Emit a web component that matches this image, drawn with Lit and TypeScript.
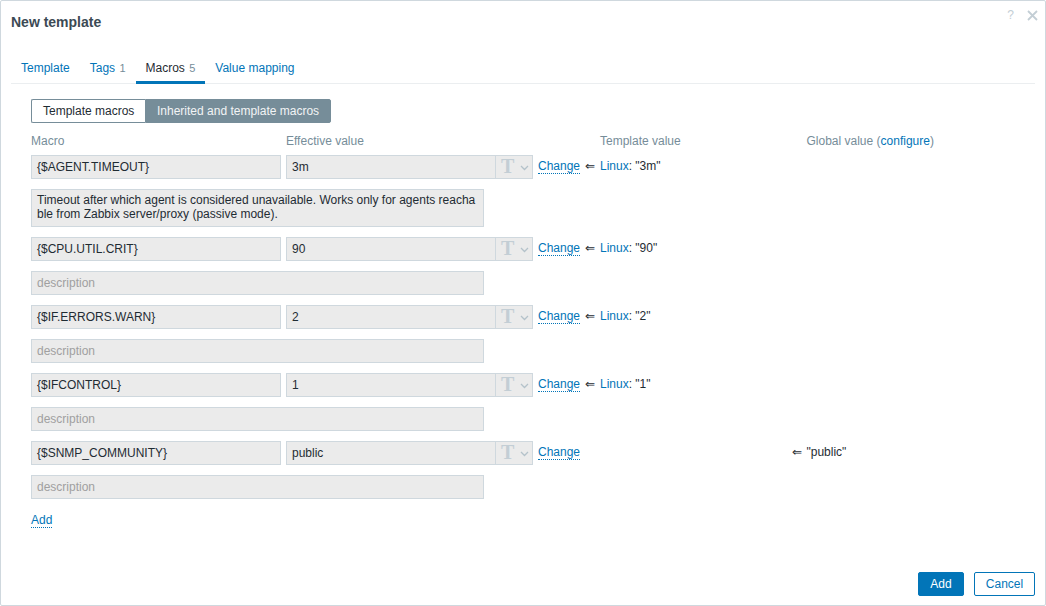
import { LitElement, html, css } from "lit";
import { customElement } from "lit/decorators.js";

interface Row { macro: string; value: string; tpl?: string; global?: string; desc?: string; }

const ROWS: Row[] = [
  { macro: "{$AGENT.TIMEOUT}", value: "3m", tpl: '"3m"', desc: "Timeout after which agent is considered unavailable. Works only for agents reachable from Zabbix server/proxy (passive mode)." },
  { macro: "{$CPU.UTIL.CRIT}", value: "90", tpl: '"90"' },
  { macro: "{$IF.ERRORS.WARN}", value: "2", tpl: '"2"' },
  { macro: "{$IFCONTROL}", value: "1", tpl: '"1"' },
  { macro: "{$SNMP_COMMUNITY}", value: "public", global: '"public"' },
];

@customElement("app-root")
export class AppRoot extends LitElement {
  static styles = css`
    :host { display: block; width: 1046px; height: 606px; font-family: "Liberation Sans", Arial, sans-serif; font-size: 12px; color: #1f2c33; }
    * { box-sizing: border-box; }
    .dialog { position: relative; height: 606px; border: 1px solid #cfd8de; border-radius: 2px; background: #fff; display: flex; flex-direction: column; }
    .title { margin: 13px 0 0 10px; font-size: 14px; line-height: 16px; font-weight: bold; color: #3c4a54; }
    .tools { position: absolute; top: 7px; right: 7px; display: flex; align-items: center; gap: 13px; color: #c3ced5; }
    .help { font-size: 12px; line-height: 14px; }
    .tabs { display: flex; margin: 21px 10px 0 10px; border-bottom: 1px solid #ebeef0; height: 33px; padding-left: 0; }
    .tab { padding: 9px 10px 0; height: 33px; line-height: 16px; color: #0275b8; white-space: nowrap; }
    .tab .n { color: #768d99; margin-left: 1px; font-size: 11px; }
    .tab.on { color: #1f2c33; border-bottom: 3px solid #0275b8; }
    .panel { padding: 15px 0 0 30px; }
    .seg { display: flex; height: 24px; }
    .seg div { height: 24px; line-height: 22px; padding: 0 11px; border: 1px solid #768d99; white-space: nowrap; }
    .seg .a { background: #fff; border-radius: 2px 0 0 2px; width: 114px; border-right: none; }
    .seg .b { background: #768d99; color: #f2f4f5; border-radius: 0 2px 2px 0; width: 186px; }
    .grid { display: grid; grid-template-columns: 250px 5px 247px 5px 47px 15px 191.5px 15px auto; row-gap: 10px; margin-top: 11px; }
    .head { color: #768d99; line-height: 14px; margin-bottom: -3px; }
    .c1 { grid-column: 1; } .c3 { grid-column: 3; } .c5 { grid-column: 5; } .c6 { grid-column: 6; } .c7 { grid-column: 7; } .c8 { grid-column: 8; } .c9 { grid-column: 9; }
    .g-head { grid-column: 9; white-space: nowrap; }
    .input { height: 24px; line-height: 22px; background: #ebebeb; border: 1px solid #cfd8de; padding: 0 5px; white-space: nowrap; overflow: hidden; }
    .valwrap { display: flex; height: 24px; }
    .valwrap .input { flex: 1; border-right: none; }
    .typebtn { width: 38px; height: 24px; background: #ebebeb; border: 1px solid #cfd8de; display: flex; align-items: center; padding-left: 5px; gap: 6px; }
    .typebtn .t { font-family: "Liberation Serif", serif; font-weight: bold; font-size: 20px; line-height: 20px; margin-top: -2px; color: #c3ced5; }
    .typebtn svg { display: block; margin-top: 1px; }
    .cell { line-height: 14px; padding-top: 4px; white-space: nowrap; height: 24px; }
    a { color: #0275b8; text-decoration: none; }
    .dot { border-bottom: 1px dotted #0275b8; display: inline-block; line-height: 14px; }
    .change { padding-left: 0; }
    .arrow { font-size: 12px; }
    .desc { grid-column: 1 / span 3; width: 453px; border: 1px solid #cfd8de; background: #ebebeb; padding: 3px 5px 5px; line-height: 14px; word-break: break-all; min-height: 24px; }
    .desc.ph { color: #a0a0a0; height: 24px; padding: 4px 5px; }
    .add { margin-top: 14px; line-height: 14px; }
    .footer { margin-top: auto; display: flex; justify-content: flex-end; gap: 10px; padding: 0 10px 9px 0; }
    .btn { height: 24px; line-height: 22px; text-align: center; border: 1px solid #0275b8; border-radius: 2px; }
    .btn.p { width: 46px; background: #0275b8; color: #fff; }
    .btn.s { width: 61px; background: #fff; color: #0275b8; }
  `;

  private row(r: Row) {
    return html`
      <div class="c1 input">${r.macro}</div>
      <div class="c3 valwrap">
        <div class="input">${r.value}</div>
        <div class="typebtn"><span class="t">T</span>
          <svg width="9" height="6" viewBox="0 0 9 6"><path d="M1 1l3.5 3.5L8 1" fill="none" stroke="#b4c2ca" stroke-width="1.3"/></svg>
        </div>
      </div>
      <div class="c5 cell change"><a class="dot">Change</a></div>
      ${r.tpl ? html`<div class="c6 cell arrow">⇐</div><div class="c7 cell"><a>Linux</a>: ${r.tpl}</div>` : ""}
      ${r.global ? html`<div class="c8 cell arrow">⇐</div><div class="c9 cell">${r.global}</div>` : ""}
      ${r.desc
        ? html`<div class="desc">${r.desc}</div>`
        : html`<div class="desc ph">description</div>`}
    `;
  }

  render() {
    return html`
      <div class="dialog">
        <div class="title">New template</div>
        <div class="tools">
          <span class="help">?</span>
          <svg width="11" height="11" viewBox="0 0 11 11"><path d="M1 1l9 9M10 1l-9 9" stroke="#c3ced5" stroke-width="1.8" fill="none"/></svg>
        </div>
        <div class="tabs">
          <div class="tab">Template</div>
          <div class="tab">Tags <span class="n">1</span></div>
          <div class="tab on">Macros <span class="n">5</span></div>
          <div class="tab">Value mapping</div>
        </div>
        <div class="panel">
          <div class="seg"><div class="a">Template macros</div><div class="b">Inherited and template macros</div></div>
          <div class="grid">
            <div class="c1 head">Macro</div>
            <div class="c3 head">Effective value</div>
            <div class="c7 head">Template value</div>
            <div class="g-head head">Global value (<a>configure</a>)</div>
            ${ROWS.map((r) => this.row(r))}
          </div>
          <div class="add"><a class="dot">Add</a></div>
        </div>
        <div class="footer">
          <div class="btn p">Add</div>
          <div class="btn s">Cancel</div>
        </div>
      </div>
    `;
  }
}
